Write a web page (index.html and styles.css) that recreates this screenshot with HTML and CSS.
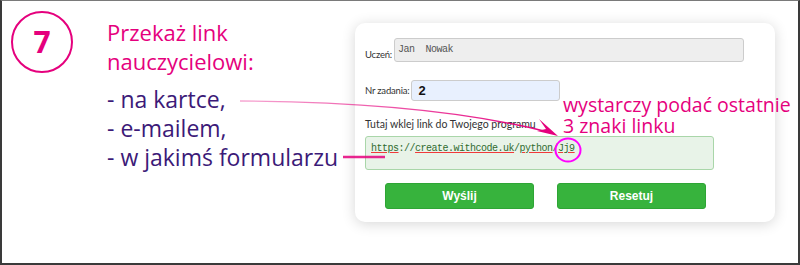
FILE: index.html
```html
<!DOCTYPE html>
<html>
<head>
    <meta charset="utf-8">
    <title>Krok 7 - przekaż link</title>
    <link rel="stylesheet" href="styles.css">
</head>
<body>
    <div class="frame">
        <div class="step">
            <div class="step-num">7</div>
            <div class="step-text">
                <div class="title">Przekaż link<br>nauczycielowi:</div>
                <ul class="ways">
                    <li>- na kartce,</li>
                    <li>- e-mailem,</li>
                    <li>- w jakimś formularzu</li>
                </ul>
            </div>
        </div>

        <div class="card">
            <div class="row row-name">
                <label>Uczeń:</label>
                <div class="field name-field">Jan  Nowak</div>
            </div>
            <div class="row row-task">
                <label>Nr zadania:</label>
                <div class="field task-field">2</div>
            </div>
            <div class="link-label">Tutaj wklej link do Twojego programu</div>
            <div class="field link-field"><span class="typo">https</span>://<span class="typo">create.withcode.uk</span>/<span class="typo">python</span>/<span class="typo">Jj9</span></div>
            <div class="buttons">
                <button class="btn">Wyślij</button>
                <button class="btn">Resetuj</button>
            </div>
        </div>

        <!-- annotation drawn over the screenshot -->
        <div class="note">wystarczy podać ostatnie<br>3 znaki linku</div>
        <svg class="arrows" width="800" height="265" viewBox="0 0 800 265">
            <defs>
                <linearGradient id="fade" x1="0" y1="0" x2="1" y2="0">
                    <stop offset="0" stop-color="#e5007d" stop-opacity="0.35"/>
                    <stop offset="1" stop-color="#e5007d" stop-opacity="1"/>
                </linearGradient>
            </defs>
            <path d="M240 101 Q 430 102 548 132" fill="none" stroke="url(#fade)" stroke-width="1.4"/>
            <polygon points="558,136 539,119 546,129 537,131" fill="#e5007d"/>
            <path d="M343 157 L 385 157" stroke="#e5007d" stroke-width="2.5" stroke-opacity="0.85"/>
            <ellipse cx="568" cy="150" rx="12.5" ry="11.5" fill="none" stroke="#ff00ff" stroke-width="2"/>
        </svg>
    </div>
</body>
</html>
```

FILE: styles.css
```css
body {
    margin: 0;
    background: #fff;
}
.frame {
    position: relative;
    box-sizing: border-box;
    width: 800px;
    height: 265px;
    border-top: 1px solid #7a7a7a;
    border-left: 2px solid #3a3a3a;
    border-right: 2px solid #3a3a3a;
    border-bottom: 2px solid #3a3a3a;
    display: flex;
    align-items: flex-start;
    overflow: hidden;
}
.step {
    display: flex;
    width: 353px;
    padding: 10px 0 0 9px;
    box-sizing: border-box;
}
.step-num {
    width: 58px;
    height: 58px;
    border: 2px solid #e5007d;
    border-radius: 50%;
    color: #e5007d;
    font-family: "Open Sans", sans-serif;
    font-weight: bold;
    font-size: 30px;
    line-height: 58px;
    text-align: center;
    flex: none;
}
.step-text {
    margin-left: 34px;
    margin-top: 7px;
    font-family: "Open Sans", sans-serif;
    font-size: 22px;
    line-height: 29px;
}
.title {
    color: #e5007d;
}
.ways {
    list-style: none;
    margin: 9px 0 0 0;
    padding: 0;
    color: #3c1a78;
    font-size: 23px;
}
.card {
    margin-top: 22px;
    width: 420px;
    height: 199px;
    box-sizing: border-box;
    background: #fff;
    border-radius: 10px;
    box-shadow: 0 2px 14px rgba(0, 0, 0, 0.16);
    padding: 15px 10px 0 10px;
    font-family: Lato, sans-serif;
    font-size: 10.5px;
    color: #333;
}
.row {
    display: flex;
    align-items: center;
}
.row label {
    font-size: 9.5px;
    letter-spacing: -0.2px;
    margin-right: 2px;
}
.row-name {
    align-items: flex-end;
}
.row-name label {
    line-height: 14px;
}
.field {
    box-sizing: border-box;
    border: 1px solid #ccc;
    border-radius: 3px;
}
.name-field {
    width: 350px;
    height: 24px;
    background: #eee;
    font-family: "Liberation Mono", monospace;
    font-size: 10px;
    letter-spacing: -0.5px;
    color: #555;
    padding: 5px 3px;
    white-space: pre;
}
.row-task {
    margin-top: 18px;
}
.task-field {
    width: 149px;
    height: 21px;
    background: #e8f0fe;
    font-family: "Liberation Sans", Arial, sans-serif;
    font-weight: bold;
    font-size: 13px;
    color: #111;
    padding: 2px 6px;
}
.link-label {
    margin-top: 16px;
    line-height: 14px;
}
.link-field {
    margin-top: 5px;
    width: 349px;
    height: 34px;
    background: #e8f3e8;
    border-color: #a9d6a9;
    font-family: "Liberation Mono", monospace;
    font-size: 10px;
    letter-spacing: -0.5px;
    color: #2f6b2f;
    padding: 6px 5px;
}
.typo {
    text-decoration: underline;
    text-decoration-color: #f03a3a;
}
.buttons {
    display: flex;
    gap: 23px;
    margin: 13px 0 0 20px;
}
.btn {
    width: 149px;
    height: 26px;
    background: #37b33d;
    border: 1px solid #2ea535;
    border-radius: 3px;
    color: #fff;
    font-family: "Liberation Sans", Arial, sans-serif;
    font-size: 12px;
    font-weight: bold;
}
.note {
    position: absolute;
    left: 561px;
    top: 93px;
    font-family: "Open Sans", sans-serif;
    font-size: 19.5px;
    line-height: 21px;
    color: #e5007d;
}
.arrows {
    position: absolute;
    left: -2px;
    top: -1px;
}
```
